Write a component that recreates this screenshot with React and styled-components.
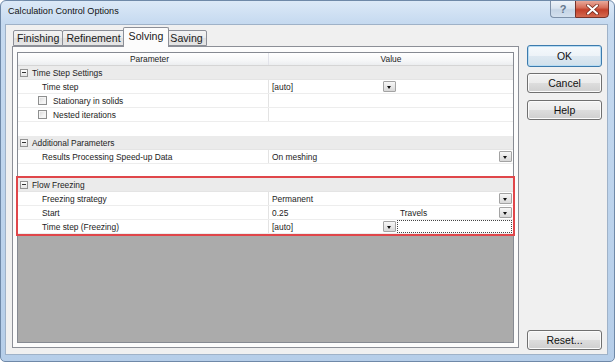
import React from 'react';
import styled, { createGlobalStyle } from 'styled-components';

const GlobalStyle = createGlobalStyle`
  html, body { margin: 0; padding: 0; background: #fff; }
  body { font-family: "Liberation Sans", Arial, sans-serif; color: #000; }
  * { box-sizing: border-box; }
`;

const App = () => (
  <>
    <GlobalStyle />
    <Window>
      <TitleBar>
        <Title>Calculation Control Options</Title>
        <Controls>
          <HelpBox>?</HelpBox>
          <CloseBox>
            <svg width="13" height="11" viewBox="0 0 13 11">
              <path d="M2 1.5 L11 9.5 M11 1.5 L2 9.5" stroke="#6b2418" strokeWidth="3.6" strokeLinecap="round" />
              <path d="M2 1.5 L11 9.5 M11 1.5 L2 9.5" stroke="#fff" strokeWidth="2.2" strokeLinecap="round" />
            </svg>
          </CloseBox>
        </Controls>
      </TitleBar>
      <Client>
        <LeftCol>
          <TabStrip>
            <Tab>Finishing</Tab>
            <Tab>Refinement</Tab>
            <Tab $active>Solving</Tab>
            <Tab>Saving</Tab>
          </TabStrip>
          <Panel>
            <Grid>
              <Header>
                <HeadParam>Parameter</HeadParam>
                <HeadValue>Value</HeadValue>
              </Header>

              <GroupRow label="Time Step Settings" />
              <Row>
                <ParamCell>Time step</ParamCell>
                <ValueCell>
                  <Combo $width={128}>[auto]<DropBtn /></Combo>
                </ValueCell>
              </Row>
              <Row>
                <ParamCell $check><Check />Stationary in solids</ParamCell>
                <ValueCell />
              </Row>
              <Row>
                <ParamCell $check><Check />Nested iterations</ParamCell>
                <ValueCell />
              </Row>
              <BlankRow />

              <GroupRow label="Additional Parameters" />
              <Row>
                <ParamCell>Results Processing Speed-up Data</ParamCell>
                <ValueCell>
                  <Combo>On meshing<DropBtn /></Combo>
                </ValueCell>
              </Row>
              <BlankRow />

              <Highlight>
                <GroupRow label="Flow Freezing" />
                <Row>
                  <ParamCell>Freezing strategy</ParamCell>
                  <ValueCell>
                    <Combo>Permanent<DropBtn /></Combo>
                  </ValueCell>
                </Row>
                <Row>
                  <ParamCell>Start</ParamCell>
                  <ValueCell>
                    <Combo $width={128}>0.25</Combo>
                    <Combo>Travels<DropBtn /></Combo>
                  </ValueCell>
                </Row>
                <Row>
                  <ParamCell>Time step (Freezing)</ParamCell>
                  <ValueCell>
                    <Combo $width={128}>[auto]<DropBtn /></Combo>
                    <FocusBox />
                  </ValueCell>
                </Row>
              </Highlight>
            </Grid>
          </Panel>
        </LeftCol>
        <RightCol>
          <Button $default>OK</Button>
          <Button>Cancel</Button>
          <Button $gap={7}>Help</Button>
          <Button $bottom>Reset...</Button>
        </RightCol>
      </Client>
    </Window>
  </>
);

export default App;

const GroupRow = ({ label }) => (
  <Group>
    <Collapse />
    <span>{label}</span>
  </Group>
);

const Window = styled.div`
  width: 615px;
  height: 362px;
  display: flex;
  flex-direction: column;
  background: linear-gradient(180deg, #dce9f7 0px, #c6daf0 22px, #bcd3ec 60%, #b6cee9 100%);
  border: 1px solid #6f89a8;
  border-radius: 6px 6px 5px 5px;
  overflow: hidden;
`;

const TitleBar = styled.div`
  height: 23px;
  display: flex;
  align-items: flex-start;
  padding-left: 7px;
`;

const Title = styled.div`
  font-size: 9.1px;
  line-height: 20px;
  color: #111;
`;

const Controls = styled.div`
  margin-left: auto;
  margin-right: 5px;
  margin-top: -1px;
  display: flex;
`;

const HelpBox = styled.div`
  width: 25px;
  height: 18px;
  border: 1px solid #7d90a8;
  border-right: none;
  border-radius: 0 0 0 4px;
  background: linear-gradient(180deg, #eef3f9 0%, #d9e4f0 45%, #c5d4e5 55%, #d3e0ee 100%);
  color: #63768c;
  font-size: 11px;
  font-weight: bold;
  display: flex;
  align-items: center;
  justify-content: center;
`;

const CloseBox = styled.div`
  width: 34px;
  height: 18px;
  border: 1px solid #76332a;
  border-radius: 0 0 4px 0;
  background: linear-gradient(180deg, #e9a99a 0%, #d7705c 40%, #c3412b 55%, #d4694f 100%);
  display: flex;
  align-items: center;
  justify-content: center;
`;

const Client = styled.div`
  flex: 1;
  display: flex;
  margin: 0 6px 6px 4px;
  background: #f0f0f0;
  border: 1px solid #9fb2c8;
`;

const LeftCol = styled.div`
  width: 513px;
  display: flex;
  flex-direction: column;
  padding: 2px 0 6px 6px;
`;

const TabStrip = styled.div`
  height: 19px;
  display: flex;
  align-items: flex-end;
  padding-left: 1px;
`;

const Tab = styled.div`
  position: relative;
  height: ${p => (p.$active ? 20 : 16)}px;
  margin: ${p => (p.$active ? '0 -2px -1px -2px' : '0 0 0 -1px')};
  padding: 0 ${p => (p.$active ? 5 : 3)}px;
  border: 1px solid #8c8f97;
  border-bottom: ${p => (p.$active ? 'none' : '1px solid #8c8f97')};
  border-radius: 2px 2px 0 0;
  background: ${p => (p.$active ? '#fcfcfc' : 'linear-gradient(180deg, #f3f3f3 0%, #ebebeb 50%, #dedede 51%, #e6e6e6 100%)')};
  z-index: ${p => (p.$active ? 2 : 1)};
  font-size: 10.6px;
  line-height: ${p => (p.$active ? 17 : 15)}px;
  color: #1a1a1a;
  white-space: nowrap;

  &:first-child {
    margin-left: 0;
  }
`;

const Panel = styled.div`
  flex: 1;
  display: flex;
  border: 1px solid #8c8f97;
  background: #fcfcfc;
  padding: 5px 4px 4px 4px;
`;

const Grid = styled.div`
  flex: 1;
  display: flex;
  flex-direction: column;
  border: 1px solid #868a92;
  background: #ababab;
  font-size: 8.4px;
  color: #1c1c1c;
`;

const Header = styled.div`
  height: 13px;
  display: flex;
  background: linear-gradient(180deg, #ffffff 0%, #f6f7f8 60%, #eceef0 100%);
  border-bottom: 1px solid #d5d5d5;
  line-height: 12px;
`;

const HeadParam = styled.div`
  width: 250px;
  padding-left: 13px;
  text-align: center;
`;

const HeadValue = styled.div`
  flex: 1;
  text-align: center;
  border-left: 1px solid #e2e3ea;
`;

const Group = styled.div`
  height: 14px;
  display: flex;
  align-items: center;
  gap: 4px;
  padding-left: 2px;
  background: #ebebeb;
  border-bottom: 1px solid #e4e4e4;
`;

const Collapse = styled.div`
  position: relative;
  width: 8px;
  height: 8px;
  border: 1px solid #939393;
  background: linear-gradient(180deg, #ffffff, #e4e4e4);

  &::after {
    content: '';
    position: absolute;
    left: 1px;
    top: 2px;
    width: 4px;
    height: 1px;
    background: #333;
  }
`;

const Row = styled.div`
  height: 14px;
  display: flex;
  background: #fff;
  border-bottom: 1px solid #ededed;
`;

const BlankRow = styled.div`
  height: 14px;
  background: #fff;
`;

const ParamCell = styled.div`
  width: 250px;
  display: flex;
  align-items: center;
  gap: 6px;
  padding-left: ${p => (p.$check ? 20 : 24)}px;
  white-space: nowrap;
`;

const Check = styled.div`
  width: 9px;
  height: 9px;
  border: 1px solid #8e8f8f;
  background: linear-gradient(135deg, #d6d6d6 0%, #f2f2f2 60%, #fbfbfb 100%);
  box-shadow: inset 0 0 0 1px #f4f4f4;
`;

const ValueCell = styled.div`
  flex: 1;
  display: flex;
  border-left: 1px solid #e3e3e3;
`;

const Combo = styled.div`
  ${p => (p.$width ? `width: ${p.$width}px;` : 'flex: 1;')}
  display: flex;
  align-items: center;
  padding-left: 3px;
  white-space: nowrap;
`;

const DropBtn = styled.div`
  position: relative;
  margin-left: auto;
  margin-right: 1px;
  width: 13px;
  height: 11px;
  border: 1px solid #a3a3a3;
  border-radius: 1px;
  background: linear-gradient(180deg, #f7f7f7 0%, #e8e8e8 50%, #d8d8d8 100%);

  &::after {
    content: '';
    position: absolute;
    left: 3px;
    top: 4px;
    border-left: 2.5px solid transparent;
    border-right: 2.5px solid transparent;
    border-top: 3px solid #111;
  }
`;

const FocusBox = styled.div`
  flex: 1;
  margin: 0 1px 0 0;
  border: 1px dotted #444;
`;

const Highlight = styled.div`
  position: relative;
  z-index: 1;
  outline: 2px solid #e0464a;
`;

const RightCol = styled.div`
  width: 75px;
  margin-left: 8px;
  display: flex;
  flex-direction: column;
  padding: 20px 0 4px 0;
`;

const Button = styled.div`
  height: ${p => (p.$default ? 22 : 20)}px;
  margin-top: ${p => (p.$bottom ? 'auto' : p.$default ? '0' : `${p.$gap || 6}px`)};
  border: 1px solid ${p => (p.$default ? '#3d7bad' : '#707070')};
  border-radius: 3px;
  box-shadow: inset 0 0 0 1px ${p => (p.$default ? '#b8dcf3' : '#fbfbfb')};
  background: ${p => (p.$default
    ? 'linear-gradient(180deg, #f5f9fc 0%, #edf3f8 50%, #dde8f1 51%, #d2e1ec 100%)'
    : 'linear-gradient(180deg, #f3f3f3 0%, #ebebeb 50%, #dddddd 51%, #cfcfcf 100%)')};
  display: flex;
  align-items: center;
  justify-content: center;
  font-size: 10.5px;
  color: #111;
`;
